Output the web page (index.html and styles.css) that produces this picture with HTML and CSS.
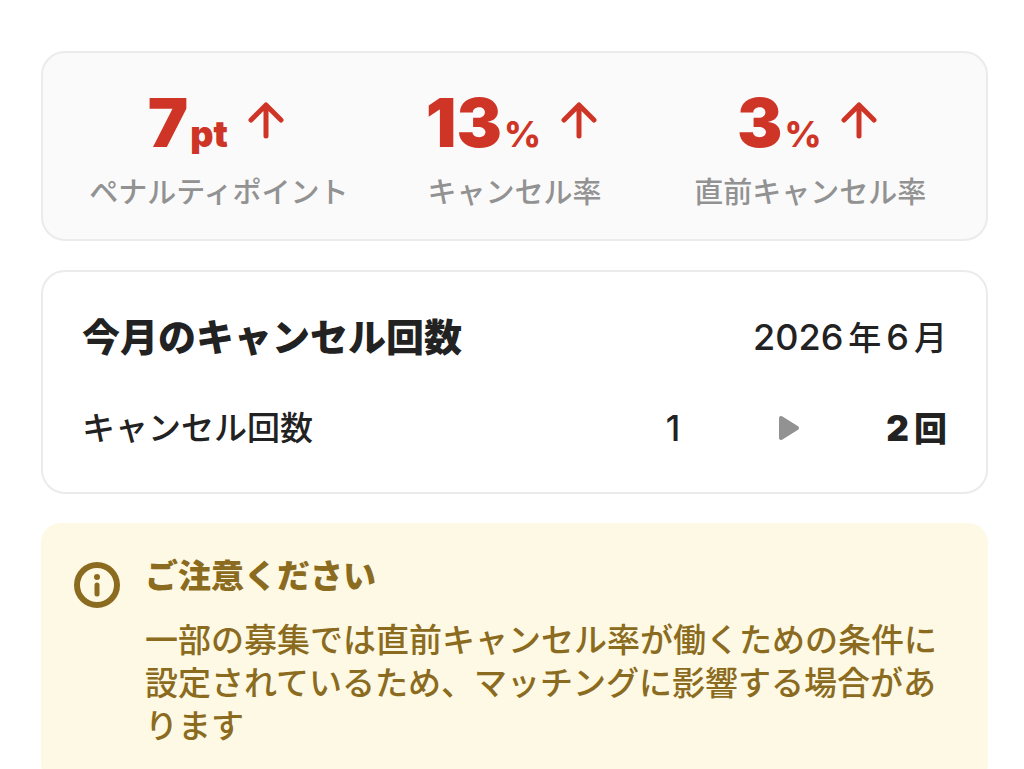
FILE: index.html
```html
<!DOCTYPE html>
<html lang="ja">
<head>
  <meta charset="UTF-8">
  <meta name="viewport" content="width=device-width, initial-scale=1">
  <title>キャンセル回数</title>
  <link rel="stylesheet" href="styles.css">
</head>
<body>
  <main class="container">
    <section class="card stats">
      <div class="stat">
        <div class="stat-value">
          <span class="number">7<span class="unit">pt</span></span>
          <svg class="arrow" viewBox="0 0 36 38" fill="none" aria-hidden="true">
            <path d="M18 34V4M3 18L18 3L33 18" stroke="currentColor" stroke-width="5" stroke-linecap="round" stroke-linejoin="round"/>
          </svg>
        </div>
        <div class="stat-label">ペナルティポイント</div>
      </div>
      <div class="stat">
        <div class="stat-value">
          <span class="number">13<span class="unit percent">%</span></span>
          <svg class="arrow" viewBox="0 0 36 38" fill="none" aria-hidden="true">
            <path d="M18 34V4M3 18L18 3L33 18" stroke="currentColor" stroke-width="5" stroke-linecap="round" stroke-linejoin="round"/>
          </svg>
        </div>
        <div class="stat-label">キャンセル率</div>
      </div>
      <div class="stat">
        <div class="stat-value">
          <span class="number">3<span class="unit percent">%</span></span>
          <svg class="arrow" viewBox="0 0 36 38" fill="none" aria-hidden="true">
            <path d="M18 34V4M3 18L18 3L33 18" stroke="currentColor" stroke-width="5" stroke-linecap="round" stroke-linejoin="round"/>
          </svg>
        </div>
        <div class="stat-label">直前キャンセル率</div>
      </div>
    </section>

    <section class="card history">
      <div class="history-header">
        <h2 class="title">今月のキャンセル回数</h2>
        <span class="month">2026<span class="kanji">年</span>6<span class="kanji">月</span></span>
      </div>
      <div class="history-row">
        <span class="row-label">キャンセル回数</span>
        <span class="before">1</span>
        <svg class="play" viewBox="0 0 22 26" aria-hidden="true">
          <path d="M3 3L19 13L3 23Z" fill="currentColor" stroke="currentColor" stroke-width="4" stroke-linejoin="round"/>
        </svg>
        <span class="after">2<span class="kanji">回</span></span>
      </div>
    </section>

    <section class="notice">
      <svg class="info" viewBox="0 0 48 48" fill="none" aria-hidden="true">
        <circle cx="24" cy="24" r="20" stroke="currentColor" stroke-width="6"/>
        <circle cx="24" cy="16" r="3" fill="currentColor"/>
        <path d="M24 24V33" stroke="currentColor" stroke-width="5" stroke-linecap="round"/>
      </svg>
      <div class="notice-body">
        <h3 class="notice-title">ご注意ください</h3>
        <p class="notice-text">一部の募集では直前キャンセル率が働くための条件に設定されているため、マッチングに影響する場合があります</p>
      </div>
    </section>
  </main>
</body>
</html>
```
FILE: styles.css
```css
* {
  box-sizing: border-box;
}
body {
  margin: 0;
  background-color: #fff;
  color: #222;
  font-family: Inter, "Noto Sans CJK JP", sans-serif;
}
h2,
h3,
p {
  margin: 0;
}
.container {
  display: flex;
  flex-direction: column;
  gap: 29px;
  padding: 51px 36px 0 41px;
}
.card {
  border: 2px solid #ebebeb;
  border-radius: 24px;
}
.stats {
  display: grid;
  grid-template-columns: repeat(3, 1fr);
  padding: 35px 28px 22px;
  background-color: #fafafa;
}
.stat {
  display: flex;
  flex-direction: column;
  align-items: center;
  gap: 13px;
}
.stat-value {
  display: flex;
  gap: 20px;
  margin-right: 6px;
  color: #cf3527;
}
.number {
  font-size: 68px;
  font-weight: 900;
  line-height: 68px;
}
.unit {
  margin-left: 2px;
  font-size: 36px;
  line-height: 1;
}
.percent {
  font-weight: 800;
}
.arrow {
  width: 36px;
  height: 38px;
  margin-top: 14px;
}
.stat-label {
  color: #929292;
  font-size: 29px;
  font-weight: 500;
  line-height: 48px;
}
.history {
  padding: 37px 39px 36px;
}
.history-header,
.history-row {
  display: flex;
  align-items: center;
  line-height: 56px;
}
.history-header {
  justify-content: space-between;
}
.title {
  font-size: 38px;
  font-weight: 900;
}
.month {
  font-size: 36px;
  font-weight: 500;
}
.kanji {
  margin: 0 5px;
  font-size: 33px;
  line-height: 1;
}
.kanji:last-child {
  margin-right: 0;
}
.history-row {
  margin-top: 35px;
  font-size: 35px;
  font-weight: 500;
}
.row-label {
  font-size: 33px;
}
.before {
  margin-left: auto;
}
.play {
  width: 22px;
  height: 26px;
  margin: 0 86px 0 98px;
  color: #929292;
}
.after {
  font-weight: 900;
}
.notice {
  display: flex;
  gap: 24px;
  padding: 31px 38px 36px 32px;
  border-radius: 20px;
  background-color: #fef9e4;
  color: #8b6b20;
}
.info {
  flex: none;
  width: 48px;
  height: 48px;
  margin-top: 7px;
}
.notice-title {
  font-size: 33px;
  font-weight: 900;
  line-height: 44px;
}
.notice-text {
  margin-top: 21px;
  font-size: 33px;
  font-weight: 500;
  line-height: 43px;
}
```
